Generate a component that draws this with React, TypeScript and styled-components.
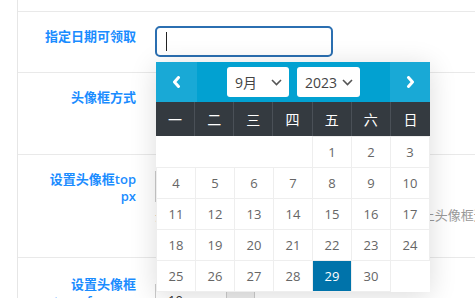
import styled, { createGlobalStyle } from 'styled-components';

const GlobalStyle = createGlobalStyle`
  html, body {
    margin: 0;
    padding: 0;
    background: #fff;
  }
  body {
    font-family: "Open Sans", "Noto Sans CJK SC", sans-serif;
    font-size: 13px;
    color: #333;
    overflow: hidden;
  }
`;

const weekDays = ['一', '二', '三', '四', '五', '六', '日'];

// 2023年9月 starts on a Friday
const buildWeeks = () => {
  const cells: (number | null)[] = [null, null, null, null];
  for (let d = 1; d <= 30; d++) cells.push(d);
  while (cells.length % 7) cells.push(null);
  const weeks: (number | null)[][] = [];
  for (let i = 0; i < cells.length; i += 7) weeks.push(cells.slice(i, i + 7));
  return weeks;
};

const Chevron = ({ dir }: { dir: 'left' | 'right' | 'down' }) => {
  if (dir === 'down') {
    return (
      <svg width="11" height="7" viewBox="0 0 11 7">
        <path d="M1 1 L5.5 5.5 L10 1" fill="none" stroke="#555" strokeWidth="1.6" />
      </svg>
    );
  }
  return (
    <svg width="9" height="12" viewBox="0 0 9 12">
      <path
        d={dir === 'left' ? 'M6.5 1.5 L2.5 6 L6.5 10.5' : 'M2.5 1.5 L6.5 6 L2.5 10.5'}
        fill="none"
        stroke="#fff"
        strokeWidth="3"
        strokeLinecap="round"
        strokeLinejoin="round"
      />
    </svg>
  );
};

export default function App() {
  const weeks = buildWeeks();

  return (
    <Page>
      <GlobalStyle />
      <Form>
        <TopStub />
        <Row>
          <Label>指定日期可领取</Label>
          <Field $top={14} $bottom={15}>
            <DateField>
              <DateInput>
                <Caret />
              </DateInput>
              <Calendar>
                <CalHeader>
                  <NavButton $width={41}>
                    <Chevron dir="left" />
                  </NavButton>
                  <HeaderMiddle>
                    <SelectBox $width={62}>
                      <span>9月</span>
                      <Chevron dir="down" />
                    </SelectBox>
                    <SelectBox $width={63}>
                      <span>2023</span>
                      <Chevron dir="down" />
                    </SelectBox>
                  </HeaderMiddle>
                  <NavButton $width={40}>
                    <Chevron dir="right" />
                  </NavButton>
                </CalHeader>
                <WeekBar>
                  {weekDays.map(d => (
                    <WeekDay key={d}>{d}</WeekDay>
                  ))}
                </WeekBar>
                <DateTable>
                  <tbody>
                    {weeks.map((week, i) => (
                      <tr key={i}>
                        {week.map((day, j) =>
                          day === null ? (
                            <EmptyCell key={j} />
                          ) : (
                            <DayCell key={j} $selected={day === 29}>
                              {day}
                            </DayCell>
                          )
                        )}
                      </tr>
                    ))}
                  </tbody>
                </DateTable>
              </Calendar>
            </DateField>
          </Field>
        </Row>
        <Row $height={81}>
          <Label>头像框方式</Label>
          <Field $top={16}>
            <RadioGroup>
              <label><input type="radio" defaultChecked name="mode" /> 默认</label>
              <label><input type="radio" name="mode" /> 自定义</label>
            </RadioGroup>
          </Field>
        </Row>
        <Row $height={102}>
          <Label>设置头像框top px</Label>
          <Field $top={16}>
            <InputGroup>
              <NumberInput>0</NumberInput>
              <Addon>px</Addon>
            </InputGroup>
            <HelpText>头像框相对头像顶部的偏移距离, 数值为负时向上头像框适当上移</HelpText>
          </Field>
        </Row>
        <Row>
          <Label $top={18}>设置头像框transform px</Label>
          <Field $top={26}>
            <InputGroup>
              <NumberInput>10</NumberInput>
              <Addon>px</Addon>
            </InputGroup>
          </Field>
        </Row>
      </Form>
    </Page>
  );
}

const Page = styled.div`
  width: 475px;
  height: 298px;
  overflow: hidden;
`;

const Form = styled.div`
  margin-left: 17px;
  border-left: 1px solid #e6e6e6;
  min-height: 298px;
`;

const TopStub = styled.div`
  height: 11px;
  border-bottom: 1px solid #e9e9e9;
`;

const Row = styled.div<{ $height?: number }>`
  display: flex;
  align-items: flex-start;
  min-height: ${({ $height }) => ($height ? `${$height}px` : 'auto')};
  border-bottom: 1px solid #e9e9e9;
`;

const Label = styled.div<{ $top?: number }>`
  flex-shrink: 0;
  width: 100px;
  margin-left: 18px;
  padding-top: ${({ $top }) => $top ?? 16}px;
  line-height: 17px;
  text-align: right;
  font-size: 13px;
  font-weight: 600;
  color: #1a8cff;
`;

const Field = styled.div<{ $top: number; $bottom?: number }>`
  margin-left: 19px;
  padding-top: ${({ $top }) => $top}px;
  padding-bottom: ${({ $bottom }) => $bottom ?? 0}px;
`;

const DateField = styled.div`
  position: relative;
`;

const DateInput = styled.div`
  box-sizing: border-box;
  width: 178px;
  height: 31px;
  border: 2px solid #2b6fb1;
  border-radius: 5px;
  padding: 0 9px;
  display: flex;
  align-items: center;
`;

const Caret = styled.span`
  display: block;
  width: 1px;
  height: 19px;
  background: #222;
`;

const Calendar = styled.div`
  position: absolute;
  z-index: 10;
  top: calc(100% + 5px);
  left: 1px;
  width: 274px;
  background: #fff;
  box-shadow: 0 4px 26px rgba(0, 0, 0, 0.14);
`;

const CalHeader = styled.div`
  display: flex;
  height: 40px;
`;

const NavButton = styled.div<{ $width: number }>`
  width: ${({ $width }) => $width}px;
  background: #19a9d6;
  display: flex;
  align-items: center;
  justify-content: center;
`;

const HeaderMiddle = styled.div`
  flex: 1;
  background: #02a1d1;
  display: flex;
  align-items: center;
  justify-content: center;
  gap: 8px;
`;

const SelectBox = styled.div<{ $width: number }>`
  box-sizing: border-box;
  width: ${({ $width }) => $width}px;
  height: 30px;
  padding: 0 7px 0 8px;
  background: #fff;
  border-radius: 3px;
  display: flex;
  align-items: center;
  justify-content: space-between;
  font-size: 14px;
  color: #444;
`;

const WeekBar = styled.div`
  display: grid;
  grid-template-columns: repeat(7, 1fr);
  height: 34px;
  background: #343a40;
`;

const WeekDay = styled.div`
  display: flex;
  align-items: center;
  justify-content: center;
  color: #fff;
  font-size: 14px;
  border-right: 1px solid #4a5057;

  &:last-child {
    border-right: none;
  }
`;

const DateTable = styled.table`
  width: 100%;
  table-layout: fixed;
  border-collapse: collapse;
`;

const DayCell = styled.td<{ $selected?: boolean }>`
  height: 30px;
  padding: 0;
  text-align: center;
  font-size: 13px;
  border: 1px solid #eee;
  background: ${({ $selected }) => ($selected ? '#0073aa' : '#fff')};
  color: ${({ $selected }) => ($selected ? '#fff' : '#666')};
`;

const EmptyCell = styled.td`
  height: 30px;
  padding: 0;
  border: none;
`;

const RadioGroup = styled.div`
  display: flex;
  gap: 16px;
  color: #666;
`;

const InputGroup = styled.div`
  display: flex;
  height: 31px;
`;

const NumberInput = styled.div`
  box-sizing: border-box;
  width: 71px;
  height: 31px;
  padding-left: 12px;
  border: 1px solid #ccc;
  border-right: none;
  display: flex;
  align-items: center;
  color: #333;
`;

const Addon = styled.div`
  box-sizing: border-box;
  width: 29px;
  height: 31px;
  border: 1px solid #ccc;
  background: #eee;
  display: flex;
  align-items: center;
  justify-content: center;
  color: #555;
`;

const HelpText = styled.div`
  margin-top: 5px;
  line-height: 17px;
  white-space: nowrap;
  color: #999;
  font-size: 13px;
`;
